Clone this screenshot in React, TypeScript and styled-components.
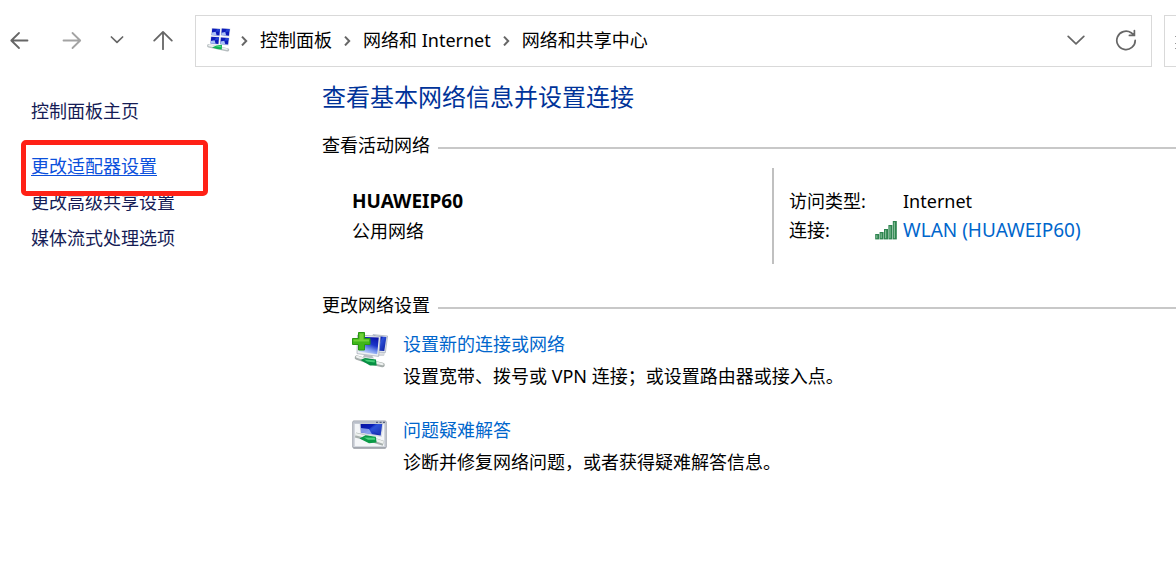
import React from "react";
import styled, { createGlobalStyle } from "styled-components";

const GlobalStyle = createGlobalStyle`
  *, *::before, *::after { box-sizing: border-box; }
  body {
    margin: 0;
    background: #fff;
    color: #000;
    font-family: "Noto Sans", "Noto Sans CJK SC", sans-serif;
    font-size: 18px;
    line-height: 28px;
    overflow-x: hidden;
  }
  h1, h2, p, ul, ol, dl, dd { margin: 0; padding: 0; font-weight: 400; }
  ul, ol { list-style: none; }
  svg { display: block; flex: none; }
`;

const Toolbar = styled.header`
  display: flex;
  align-items: stretch;
  gap: 12px;
  height: 67px;
  padding-top: 15px;
  overflow: hidden;
`;

const NavButtons = styled.nav`
  display: flex;
  flex: none;
  align-items: center;
  gap: 22px;
  width: 183px;
  padding: 0 0 2px 6px;
`;

const IconButton = styled.button<{ $width?: number }>`
  display: flex;
  align-items: center;
  justify-content: center;
  width: ${(p) => p.$width ?? 28}px;
  height: 36px;
  padding: 0;
  border: 0;
  background: none;
`;

const AddressBar = styled.div`
  display: flex;
  flex: 1;
  align-items: center;
  min-width: 0;
  padding: 0 11px 2px;
  border: 1px solid #d9d9d9;
`;

const Crumbs = styled.ol`
  display: flex;
  flex: 1;
  align-items: center;
  margin-left: -4px;
  white-space: nowrap;
`;

const Crumb = styled.li`
  display: flex;
  align-items: center;
`;

const CrumbButton = styled.button`
  padding: 0;
  border: 0;
  background: none;
  color: #000;
  font: inherit;
`;

const BarActions = styled.div`
  display: flex;
  gap: 22px;
`;

const SearchEdge = styled.div`
  display: flex;
  flex: none;
  align-items: center;
  width: 12px;
  padding-left: 10px;
  border: 1px solid #d9d9d9;
  border-right: 0;
`;

const Body = styled.div`
  display: flex;
  align-items: flex-start;
`;

const Sidebar = styled.aside`
  flex: none;
  width: 322px;
  padding: 30px 16px 0 31px;
`;

const TaskList = styled.ul`
  display: grid;
  gap: 8px;
  margin-top: 27px;
`;

const TaskItem = styled.li`
  position: relative;
`;

const TaskLink = styled.a<{ $active?: boolean }>`
  color: ${(p) => (p.$active ? "#0b50dc" : "#151c55")};
  text-decoration: ${(p) => (p.$active ? "underline" : "none")};
  text-decoration-thickness: 1px;
  text-underline-offset: 2px;
`;

const Highlight = styled.span`
  position: absolute;
  z-index: 1;
  top: -12px;
  left: -10px;
  width: 187px;
  height: 56px;
  border: 5px solid #ff2116;
  border-radius: 5px;
  pointer-events: none;
`;

const Main = styled.main`
  flex: 1;
  min-width: 0;
  padding: 12px 0 32px;
`;

const Title = styled.h1`
  color: #003399;
  font-size: 24px;
  line-height: 36px;
`;

const SectionTitle = styled.h2<{ $gap: number }>`
  display: flex;
  align-items: center;
  gap: 8px;
  margin-top: ${(p) => p.$gap}px;
  font-size: 18px;
  line-height: 28px;

  &::after {
    content: "";
    flex: 1;
    height: 2px;
    margin-top: 6px;
    background: #c8c8c8;
  }
`;

const Network = styled.div`
  display: flex;
  align-items: stretch;
  height: 96px;
  margin: 9px 0 0 30px;
`;

const NetworkName = styled.div`
  display: flex;
  flex: 0 1 420px;
  flex-direction: column;
  justify-content: center;
  line-height: 30px;
`;

const Ssid = styled.strong`
  font-size: 19px;
`;

const Details = styled.dl`
  display: grid;
  grid-template-columns: 86px 28px auto;
  align-content: center;
  padding-left: 15px;
  border-left: 2px solid #c0c0c0;
  line-height: 29px;
  white-space: nowrap;
`;

const Value = styled.dd`
  display: grid;
  grid-column: 2 / 4;
  grid-template-columns: subgrid;
  align-items: center;

  & > svg { margin-bottom: 2px; }
  & > :last-child { grid-column: 2; }
`;

const Link = styled.a<{ $size?: number }>`
  color: #0066cc;
  font-size: ${(p) => p.$size ?? 18}px;
  text-decoration: none;
`;

const Actions = styled.ul`
  display: grid;
  gap: 22px;
  margin: 9px 0 0 30px;
`;

const Action = styled.li`
  display: flex;
  gap: 15px;
  line-height: 32px;

  & > svg { margin-top: 4px; }
`;

const ArrowIcon = ({ dir, color = "#666" }: { dir: "left" | "right" | "up"; color?: string }) => (
  <svg width="20" height="20" viewBox="0 0 20 20" fill="none" stroke={color} strokeWidth="1.8" strokeLinecap="round" strokeLinejoin="round">
    {dir === "left" && <path d="M17.5 10.5H1.5M9 3L1.3 10.5L9 18" />}
    {dir === "right" && <path d="M1.5 10.5H18M10.5 3L18.2 10.5L10.5 18" />}
    {dir === "up" && <path d="M10 19.2V2M1.2 10.6L10 1.9L18.8 10.6" />}
  </svg>
);

const DownIcon = ({ width }: { width: number }) => (
  <svg width={width} height="10" viewBox={`0 0 ${width} 10`} fill="none" stroke="#666" strokeWidth="1.7" strokeLinecap="round" strokeLinejoin="round">
    <path d={width > 14 ? "M1.2 1.4L9 8.8L16.8 1.4" : "M1.4 2L7 7.4L12.6 2"} />
  </svg>
);

const CrumbArrow = () => (
  <svg width="31" height="12" viewBox="0 0 31 12" fill="none" stroke="#666" strokeWidth="2">
    <path d="M13 2.6L17.2 7L13 11.4" />
  </svg>
);

const RefreshIcon = () => (
  <svg width="22" height="22" viewBox="0 0 22 22" fill="none" stroke="#666" strokeWidth="1.7" strokeLinecap="round">
    <path d="M20.2 11.3A9.2 9.2 0 1 1 16.2 3.8L19.2 6.2M19.4 1.6V6.4H14.4" />
  </svg>
);

const ScreenFill = ({ id }: { id: string }) => (
  <defs>
    <linearGradient id={id} x1="0.75" y1="0" x2="0.3" y2="1">
      <stop offset="0" stopColor="#0a14a8" />
      <stop offset="0.4" stopColor="#1b35c8" />
      <stop offset="0.7" stopColor="#7d9cf0" />
      <stop offset="1" stopColor="#dfe9ff" />
    </linearGradient>
    <linearGradient id={`${id}-dark`} x1="0" y1="0" x2="1" y2="0.7">
      <stop offset="0" stopColor="#0812a0" />
      <stop offset="0.45" stopColor="#0b1fb8" />
      <stop offset="0.56" stopColor="#2c50d8" />
      <stop offset="1" stopColor="#1428a8" />
    </linearGradient>
  </defs>
);

const NetworkCenterIcon = () => (
  <svg width="26" height="26" viewBox="0 0 26 26">
    {[[4, 1], [13.6, 1.2], [3, 9.4], [12.7, 10]].map(([x, y]) => (
      <g key={`${x}-${y}`} transform={`translate(${x} ${y})`}>
        <path d="M.6 0L9.8.4L9 8.6L0 7.8Z" fill="#dde2ec" />
        <path d="M1.2.4L9 .9L8.4 7.6L.7 6.9Z" fill="#0d1bb8" />
        <path d="M.9 4.6L4.6 3.8L5.6 7.3L.7 6.9Z" fill="#a9c0f6" />
        <path d="M4.6 3.8L6 1L9 .9L8.7 3.4Z" fill="#2343d2" />
      </g>
    ))}
    <path d="M1.8 18.8L20.5 22.8" stroke="#b7bec0" strokeWidth="3.4" strokeLinecap="round" />
    <path d="M2 18.4L20 22.2" stroke="#eef1f1" strokeWidth="1.6" strokeLinecap="round" />
    <path d="M5 20.4L9.5 18.4L15 17.8L14.8 22.4L10 22Z" fill="#12b256" />
    <path d="M8 19.7L14 18.8V20.3Z" fill="#4fd680" />
  </svg>
);

const NewConnectionIcon = () => (
  <svg width="36" height="36" viewBox="0 0 36 36">
    <ScreenFill id="conn" />
    <path d="M21 2.6L35.6 4L33.4 20.6L20 20Z" fill="#e0e4ea" stroke="#a4acb8" strokeWidth=".7" />
    <path d="M22 3.7L34.4 5L32.3 19L22 18.6Z" fill="url(#conn-dark)" />
    <path d="M26 21.5L33 21L32 24L25 24Z" fill="#d5d8dc" />
    <path d="M5.5 3L28.4 4.3L26.6 24.4L5 21.6Z" fill="#eef0f2" stroke="#9fa7b3" strokeWidth=".7" />
    <path d="M7 4.7L26.8 5.6L25.2 22.2L6.6 19.8Z" fill="url(#conn)" />
    <path d="M12 22.7L20 23.6L22 26.4L11 25Z" fill="#b9bec4" />
    <path d="M5 25.6L14 28.5L23 31.2L30.5 33" fill="none" stroke="#a5adab" strokeWidth="4.6" strokeLinecap="round" />
    <path d="M5 24.8L14 27.6L24 30.6L30.5 32.2" fill="none" stroke="#edf0ef" strokeWidth="2.2" strokeLinecap="round" />
    <path d="M8.5 28L13 26L24 27.6L24.6 33.6L18 33.4Z" fill="#078f43" />
    <path d="M12 27.4L23 28.6L22.6 30.6L15 29.6Z" fill="#43cd75" />
    <path d="M6.5.5H12.5V6.5H18V12.5H12.5V18H6.5V12.5H.5V6.5H6.5Z" fill="#40b719" stroke="#2a9613" />
    <path d="M7.5 1.5H11.5V7.5H17V9.5H1.5V7.5H7.5Z" fill="#84dc46" opacity=".7" />
  </svg>
);

const TroubleshootIcon = () => (
  <svg width="36" height="36" viewBox="0 0 36 36">
    <ScreenFill id="trouble" />
    <rect x=".8" y="3" width="33.4" height="27" rx="1" fill="#d3d7de" stroke="#9a9fa8" />
    <path d="M1.5 4.6H33.5" stroke="#b9bfca" strokeWidth="2" />
    <path d="M24 4.4H26M27.6 4.4H29.6M31 4.4H33" stroke="#56617e" strokeWidth="1.3" />
    <rect x="3" y="6" width="29" height="22" fill="#f4f6f8" />
    <path d="M7.5 6H31.4L29.8 19L8.5 16.5Z" fill="#d5dae4" />
    <path d="M8.6 6H30.2L28.6 17.4L9 14.6Z" fill="url(#trouble-dark)" />
    <path d="M8.8 10L17 11L20 16.2L9 14.6Z" fill="#a9bff6" opacity=".75" />
    <path d="M17 11L23 6L30.2 6L28.6 17.4Z" fill="#3458da" opacity=".35" />
    <path d="M3.5 17L15 20L31.5 25.4" fill="none" stroke="#a8b0ae" strokeWidth="5" />
    <path d="M3.5 16.2L15 19L31.5 24.5" fill="none" stroke="#eef1ef" strokeWidth="2.4" />
    <path d="M7.5 20.4L13.5 17.2L23.8 18.8L24.6 24.6L17 25.2Z" fill="#0a9b47" />
    <path d="M12 19.4L22.8 19.7L23 21.7L16 21.8Z" fill="#50d580" />
    <path d="M1.5 30H33.5" stroke="#8d9299" />
  </svg>
);

const SignalIcon = () => (
  <svg width="22" height="20" viewBox="0 0 22 20">
    {[14, 12, 9, 5, 1].map((y, i) => (
      <g key={y}>
        <rect x={i * 4.4 + 0.2} y={y} width="4" height={19.4 - y} fill="#2f8450" />
        <rect x={i * 4.4 + 1.2} y={y + 1.2} width="1.2" height={17 - y} fill="#7fbd93" />
      </g>
    ))}
  </svg>
);

const CRUMBS = ["控制面板", "网络和 Internet", "网络和共享中心"];
const TASKS = ["更改适配器设置", "更改高级共享设置", "媒体流式处理选项"];
const ACTIONS = [
  { icon: <NewConnectionIcon />, title: "设置新的连接或网络", text: "设置宽带、拨号或 VPN 连接；或设置路由器或接入点。" },
  { icon: <TroubleshootIcon />, title: "问题疑难解答", text: "诊断并修复网络问题，或者获得疑难解答信息。" },
];

export default function App() {
  return (
    <>
      <GlobalStyle />
      <Toolbar>
        <NavButtons aria-label="导航">
          <IconButton aria-label="后退"><ArrowIcon dir="left" /></IconButton>
          <IconButton aria-label="前进" $width={32}><ArrowIcon dir="right" color="#a3a3a3" /></IconButton>
          <IconButton aria-label="最近位置" $width={14}><DownIcon width={14} /></IconButton>
          <IconButton aria-label="向上" $width={34}><ArrowIcon dir="up" /></IconButton>
        </NavButtons>
        <AddressBar>
          <NetworkCenterIcon />
          <Crumbs>
            {CRUMBS.map((crumb) => (
              <Crumb key={crumb}>
                <CrumbArrow />
                <CrumbButton>{crumb}</CrumbButton>
              </Crumb>
            ))}
          </Crumbs>
          <BarActions>
            <IconButton aria-label="展开地址"><DownIcon width={18} /></IconButton>
            <IconButton aria-label="刷新"><RefreshIcon /></IconButton>
          </BarActions>
        </AddressBar>
        <SearchEdge>
          <svg width="1" height="16" viewBox="0 0 1 16" stroke="#999">
            <path d="M0 3.5H1M0 10.5H1M0 15.5H1" />
          </svg>
        </SearchEdge>
      </Toolbar>
      <Body>
        <Sidebar>
          <TaskLink href="#home">控制面板主页</TaskLink>
          <TaskList>
            {TASKS.map((task, i) => (
              <TaskItem key={task}>
                <TaskLink href="#task" $active={i === 0}>{task}</TaskLink>
                {i === 0 && <Highlight />}
              </TaskItem>
            ))}
          </TaskList>
        </Sidebar>
        <Main>
          <Title>查看基本网络信息并设置连接</Title>
          <SectionTitle $gap={16}>查看活动网络</SectionTitle>
          <Network>
            <NetworkName>
              <Ssid>HUAWEIP60</Ssid>
              <span>公用网络</span>
            </NetworkName>
            <Details>
              <dt>访问类型:</dt>
              <Value><span>Internet</span></Value>
              <dt>连接:</dt>
              <Value><SignalIcon /><Link href="#wlan" $size={19}>WLAN (HUAWEIP60)</Link></Value>
            </Details>
          </Network>
          <SectionTitle $gap={27}>更改网络设置</SectionTitle>
          <Actions>
            {ACTIONS.map((action) => (
              <Action key={action.title}>
                {action.icon}
                <div>
                  <Link href="#action">{action.title}</Link>
                  <p>{action.text}</p>
                </div>
              </Action>
            ))}
          </Actions>
        </Main>
      </Body>
    </>
  );
}
